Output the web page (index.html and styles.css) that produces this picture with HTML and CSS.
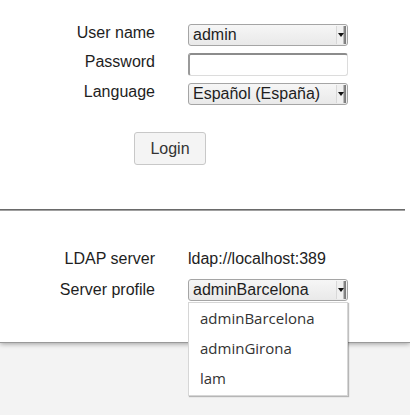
FILE: index.html
```html
<!DOCTYPE html>
<html>
<head>
<meta charset="utf-8">
<link rel="stylesheet" href="styles.css">
</head>
<body>
<div class="panel">
  <div class="form">
    <div class="label">User name</div>
    <div class="select"><span class="value">admin</span><span class="arrow"><span class="tri"></span></span></div>
    <div class="label">Password</div>
    <div class="input"></div>
    <div class="label">Language</div>
    <div class="select"><span class="value">Español (España)</span><span class="arrow"><span class="tri"></span></span></div>
  </div>
  <div class="actions"><button class="btn">Login</button></div>
  <div class="rule"></div>
  <div class="form second">
    <div class="label">LDAP server</div>
    <div class="plain">ldap://localhost:389</div>
    <div class="label">Server profile</div>
    <div class="select-wrap">
      <div class="select"><span class="value">adminBarcelona</span><span class="arrow"><span class="tri"></span></span></div>
      <div class="menu">
        <div class="item">adminBarcelona</div>
        <div class="item">adminGirona</div>
        <div class="item">lam</div>
      </div>
    </div>
  </div>
</div>
</body>
</html>
```

FILE: styles.css
```css
html, body {
  margin: 0;
  padding: 0;
}
body {
  background: #f3f3f3;
  font-family: "Liberation Sans", Arial, sans-serif;
  font-size: 16px;
  color: #1e1e1e;
  width: 410px;
  height: 415px;
  overflow: hidden;
}
.panel {
  background: #fff;
  height: 342px;
  box-shadow: 0 1px 0 #999, 0 2px 5px rgba(0,0,0,0.35);
  padding-top: 24px;
  box-sizing: border-box;
  position: relative;
}
.form {
  display: grid;
  grid-template-columns: 155px 160px;
  column-gap: 33px;
  row-gap: 7px;
  align-items: start;
}
.label {
  text-align: right;
  line-height: 18px;
}
.select {
  height: 22px;
  box-sizing: border-box;
  border: 1px solid #a5a5a5;
  border-radius: 3px;
  background: linear-gradient(#f6f6f6, #e9e9e9);
  display: flex;
  align-items: center;
  justify-content: space-between;
  padding-left: 4px;
  padding-right: 1px;
}
.value {
  line-height: 18px;
  color: #1e1e1e;
}
.arrow {
  width: 9px;
  height: 18px;
  background: linear-gradient(to right, #f0f0f0 0, #f0f0f0 6px, #8a8a8a 7px, #777 9px);
  display: flex;
  align-items: center;
  justify-content: flex-start;
  border-left: 1px solid #d8d8d8;
}
.tri {
  width: 0;
  height: 0;
  margin-left: 1px;
  border-left: 3px solid transparent;
  border-right: 3px solid transparent;
  border-top: 4px solid #111;
}
.input {
  height: 23px;
  box-sizing: border-box;
  border: 1px solid #dcdcdc;
  border-top: 2px solid #8c8c8c;
  border-left: 2px solid #9a9a9a;
  border-radius: 3px;
  background: #fff;
}
.actions {
  padding-top: 27px;
  padding-left: 134px;
}
.btn {
  width: 72px;
  height: 33px;
  font-family: "Liberation Sans", Arial, sans-serif;
  font-size: 16px;
  color: #333;
  background: #f4f4f4;
  border: 1px solid #c8c8c8;
  border-radius: 3px;
  padding: 0;
}
.rule {
  margin-top: 44px;
  width: 405px;
  height: 2px;
  background: #6a6a6a;
  border-bottom: 1px solid #a0a0a0;
  box-sizing: border-box;
}
.second {
  margin-top: 38px;
  row-gap: 10px;
  align-items: center;
}
.plain {
  line-height: 20px;
  color: #1e1e1e;
}
.select-wrap {
  position: relative;
}
.menu {
  position: absolute;
  left: 0;
  top: 23px;
  width: 160px;
  height: 94px;
  box-sizing: border-box;
  background: #fff;
  border: 1px solid #d6d6d6;
  box-shadow: 1px 1px 1px rgba(0,0,0,0.25);
  padding-top: 0;
  z-index: 2;
}
.item {
  font-family: "Open Sans", "Noto Sans", sans-serif;
  font-size: 15px;
  color: #333;
  height: 30px;
  line-height: 30px;
  padding-left: 11px;
}
```
